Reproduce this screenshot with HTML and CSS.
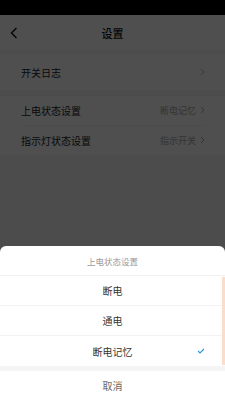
FILE: index.html
```html
<!DOCTYPE html>
<html lang="zh">
<head>
<meta charset="utf-8">
<link rel="stylesheet" href="styles.css">
</head>
<body>
<div class="page">
  <div class="statusbar"></div>
  <div class="header">
    <svg class="back" width="8" height="12" viewBox="0 0 8 12"><polyline points="6.5,1 1.5,6 6.5,11" fill="none" stroke="#111" stroke-width="1.4"/></svg>
    <div class="title">设置</div>
  </div>
  <div class="group first">
    <div class="row"><span class="label">开关日志</span><span class="value"><svg class="chev" width="5" height="8" viewBox="0 0 5 8"><polyline points="1,1 4,4 1,7" fill="none" stroke="#aaa" stroke-width="1"/></svg></span></div>
  </div>
  <div class="group">
    <div class="row line"><span class="label">上电状态设置</span><span class="value">断电记忆<svg class="chev" width="5" height="8" viewBox="0 0 5 8"><polyline points="1,1 4,4 1,7" fill="none" stroke="#aaa" stroke-width="1"/></svg></span></div>
    <div class="row"><span class="label">指示灯状态设置</span><span class="value">指示开关<svg class="chev" width="5" height="8" viewBox="0 0 5 8"><polyline points="1,1 4,4 1,7" fill="none" stroke="#aaa" stroke-width="1"/></svg></span></div>
  </div>
</div>
<div class="mask"></div>
<div class="statusbar-top"></div>
<div class="sheet">
  <div class="sheet-title">上电状态设置</div>
  <div class="opt">断电</div>
  <div class="opt">通电</div>
  <div class="opt">断电记忆<svg class="check" width="8" height="6" viewBox="0 0 8 6"><polyline points="1,3 3,5 7,1" fill="none" stroke="#2a9ad6" stroke-width="1.1"/></svg></div>
  <div class="gap"></div>
  <div class="cancel">取消</div>
  <div class="thumb"></div>
</div>
</body>
</html>
```
FILE: styles.css
```css
* { box-sizing: border-box; }
html, body { margin: 0; padding: 0; }
body {
  width: 225px;
  height: 400px;
  overflow: hidden;
  position: relative;
  font-family: "Noto Sans CJK SC", "Noto Sans", sans-serif;
  background: #f6f6f6;
}
.page { display: flex; flex-direction: column; }
.statusbar { height: 15px; background: #000; }
.header {
  height: 35px;
  background: #fdfdfd;
  display: flex;
  align-items: center;
  justify-content: center;
  position: relative;
}
.back { position: absolute; left: 10px; top: 12px; }
.title { font-size: 11px; color: #111; font-weight: 500; }
.group { background: #fefefe; margin-top: 6px; padding: 0 20px 0 21px; }
.group.first { margin-top: 4px; }
.row {
  display: flex;
  align-items: center;
  justify-content: space-between;
  height: 36px;
}
.group:not(.first) .row { height: 29.5px; }
.row.line { border-bottom: 1px solid #f0f0f0; }
.label { font-size: 10px; color: #222; }
.value { font-size: 9px; color: #aaa; display: flex; align-items: center; gap: 4px; }
.chev { display: block; }
.mask {
  position: absolute;
  inset: 0;
  background: rgba(0, 0, 0, 0.69);
}
.statusbar-top { position: absolute; left: 0; top: 0; width: 225px; height: 15px; background: #000; }
.sheet {
  position: absolute;
  left: 0;
  bottom: 0;
  width: 225px;
  height: 154px;
  background: #fff;
  border-radius: 6px 6px 0 0;
  display: flex;
  flex-direction: column;
}
.sheet-title {
  height: 30px;
  display: flex;
  align-items: center;
  justify-content: center;
  font-size: 8.5px;
  color: #9a9a9a;
  border-bottom: 1px solid #f0f0f0;
}
.opt {
  height: 30px;
  display: flex;
  align-items: center;
  justify-content: center;
  font-size: 10px;
  color: #333;
  border-bottom: 1px solid #f2f2f2;
  position: relative;
}
.opt:nth-of-type(4) { border-bottom: none; }
.check { position: absolute; right: 20px; top: 12px; }
.gap { height: 5px; background: #f5f5f5; }
.cancel {
  flex: 1;
  display: flex;
  align-items: center;
  justify-content: center;
  font-size: 10px;
  color: #666;
}
.thumb {
  position: absolute;
  right: 0;
  top: 31px;
  width: 3px;
  height: 88px;
  background: #fcdccb;
}
```
